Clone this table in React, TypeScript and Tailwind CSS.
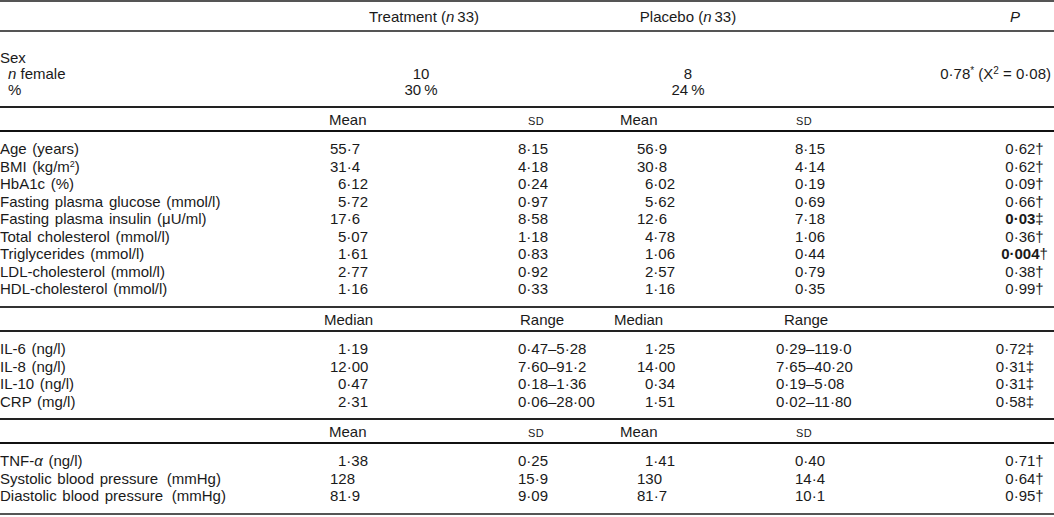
import React from "react";

const Line = ({ c = "bg-[#444]" }: { c?: string }) => <div className={`h-[2px] w-full ${c}`} />;

const SD = () => <span className="text-[11px] tracking-[0.5px]">SD</span>;

type R = {
  label: React.ReactNode;
  tm: string;
  ts: string;
  pm: string;
  ps: string;
  p: React.ReactNode;
  range?: boolean;
};

const pad = (v: string) => (/^\d[·]/.test(v) ? "pl-[8px]" : "");

const DataRow = ({ r }: { r: R }) => (
  <div className="flex h-[17.5px] items-center whitespace-nowrap">
    <div className="w-[330px] [word-spacing:1.5px]">{r.label}</div>
    <div className={`w-[188px] ${pad(r.tm)}`}>{r.tm}</div>
    <div className="w-[119px]">{r.ts}</div>
    <div className={`w-[158px] ${pad(r.pm)}`}>{r.pm}</div>
    <div className={`w-[200px] ${r.range ? "-ml-[19px]" : ""}`}>{r.ps}</div>
    <div className="flex-1 text-center">{r.p}</div>
  </div>
);

const SubHead = ({ a, b, mean }: { a: React.ReactNode; b: React.ReactNode; mean: boolean }) => (
  <div className="flex h-[22px] items-center whitespace-nowrap">
    <div className={mean ? "w-[329px]" : "w-[324px]"} />
    <div className={mean ? "w-[199px]" : "w-[196px]"}>{a}</div>
    <div className={mean ? "w-[92px]" : "w-[94px]"}>{b}</div>
    <div className={mean ? "w-[176px]" : "w-[170px]"}>{a}</div>
    <div>{b}</div>
  </div>
);

const dag = "†";
const ddag = "‡";

const rows1: R[] = [
  { label: "Age (years)", tm: "55·7", ts: "8·15", pm: "56·9", ps: "8·15", p: <>0·62{dag}</> },
  { label: <>BMI (kg/m<sup className="text-[9px]">2</sup>)</>, tm: "31·4", ts: "4·18", pm: "30·8", ps: "4·14", p: <>0·62{dag}</> },
  { label: "HbA1c (%)", tm: "6·12", ts: "0·24", pm: "6·02", ps: "0·19", p: <>0·09{dag}</> },
  { label: "Fasting plasma glucose (mmol/l)", tm: "5·72", ts: "0·97", pm: "5·62", ps: "0·69", p: <>0·66{dag}</> },
  { label: "Fasting plasma insulin (μU/ml)", tm: "17·6", ts: "8·58", pm: "12·6", ps: "7·18", p: <><b>0·03</b>{ddag}</> },
  { label: "Total cholesterol (mmol/l)", tm: "5·07", ts: "1·18", pm: "4·78", ps: "1·06", p: <>0·36{dag}</> },
  { label: "Triglycerides (mmol/l)", tm: "1·61", ts: "0·83", pm: "1·06", ps: "0·44", p: <><b>0·004</b>{dag}</> },
  { label: "LDL-cholesterol (mmol/l)", tm: "2·77", ts: "0·92", pm: "2·57", ps: "0·79", p: <>0·38{dag}</> },
  { label: "HDL-cholesterol (mmol/l)", tm: "1·16", ts: "0·33", pm: "1·16", ps: "0·35", p: <>0·99{dag}</> },
];

const rows2: R[] = [
  { label: "IL-6 (ng/l)", tm: "1·19", ts: "0·47–5·28", pm: "1·25", ps: "0·29–119·0", p: <>0·72{ddag}</>, range: true },
  { label: "IL-8 (ng/l)", tm: "12·00", ts: "7·60–91·2", pm: "14·00", ps: "7·65–40·20", p: <>0·31{ddag}</>, range: true },
  { label: "IL-10 (ng/l)", tm: "0·47", ts: "0·18–1·36", pm: "0·34", ps: "0·19–5·08", p: <>0·31{ddag}</>, range: true },
  { label: "CRP (mg/l)", tm: "2·31", ts: "0·06–28·00", pm: "1·51", ps: "0·02–11·80", p: <>0·58{ddag}</>, range: true },
];

const rows3: R[] = [
  { label: <>TNF-<i>α</i> (ng/l)</>, tm: "1·38", ts: "0·25", pm: "1·41", ps: "0·40", p: <>0·71{dag}</> },
  { label: "Systolic blood pressure\u00a0\u2009(mmHg)", tm: "128", ts: "15·9", pm: "130", ps: "14·4", p: <>0·64{dag}</> },
  { label: "Diastolic blood pressure\u00a0\u2009(mmHg)", tm: "81·9", ts: "9·09", pm: "81·7", ps: "10·1", p: <>0·95{dag}</> },
];

export default function App() {
  return (
    <div className="w-[1054px] h-[517px] bg-white text-[#1a1a1a] text-[15px] leading-none" style={{ fontFamily: '"Liberation Sans", Arial, sans-serif' }}>
      <Line c="bg-[#555]" />
      <div className="flex h-[28px] items-center whitespace-nowrap">
        <div className="w-[330px]" />
        <div className="w-[188px] text-center">Treatment (<i>n</i>&thinsp;33)</div>
        <div className="w-[340px] text-center">Placebo (<i>n</i>&thinsp;33)</div>
        <div className="flex-1 text-right pr-[34px]"><i>P</i></div>
      </div>
      <Line c="bg-[#555]" />
      <div className="pt-[17px] pb-[9px] whitespace-nowrap">
        <div className="flex h-[16px] items-center">Sex</div>
        <div className="flex h-[16px] items-center">
          <div className="w-[330px] pl-[8px]"><i>n</i> female</div>
          <div className="w-[182px] text-center">10</div>
          <div className="w-[352px] text-center">8</div>
          <div className="flex-1 text-right pr-[3px]">0·78<sup className="text-[10px]">*</sup> (X<sup className="text-[10px]">2</sup> = 0·08)</div>
        </div>
        <div className="flex h-[16px] items-center">
          <div className="w-[330px] pl-[8px]">%</div>
          <div className="w-[182px] text-center">30&thinsp;%</div>
          <div className="w-[352px] text-center">24&thinsp;%</div>
        </div>
      </div>
      <Line c="bg-[#222]" />
      <SubHead a="Mean" b={<SD />} mean />
      <Line c="bg-[#111]" />
      <div className="pt-[8px] pb-[8.5px]">
        {rows1.map((r, i) => <DataRow key={i} r={r} />)}
      </div>
      <Line c="bg-[#333]" />
      <SubHead a="Median" b="Range" mean={false} />
      <Line c="bg-[#222]" />
      <div className="pt-[8px] pb-[8px]">
        {rows2.map((r, i) => <DataRow key={i} r={r} />)}
      </div>
      <Line c="bg-[#222]" />
      <SubHead a="Mean" b={<SD />} mean />
      <Line c="bg-[#111]" />
      <div className="pt-[8px] pb-[8.5px]">
        {rows3.map((r, i) => <DataRow key={i} r={r} />)}
      </div>
      <Line c="bg-[#555]" />
    </div>
  );
}
